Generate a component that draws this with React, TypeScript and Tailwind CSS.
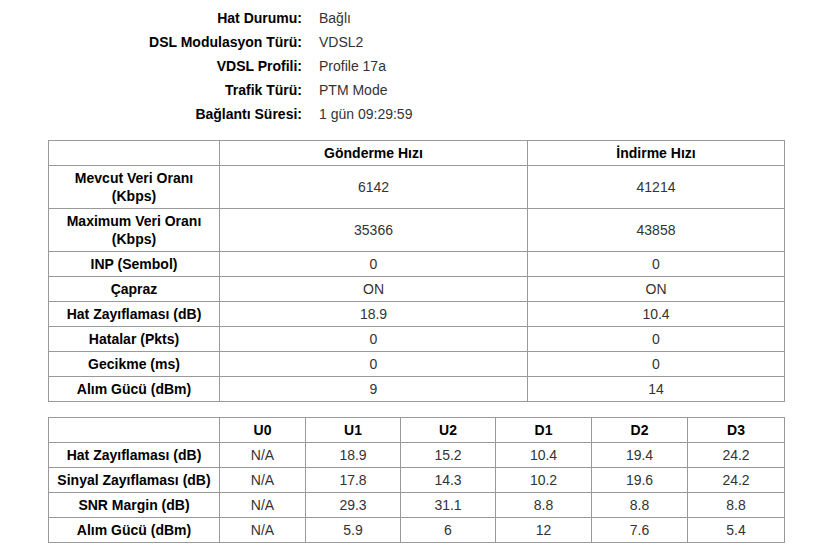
const info: [string, string][] = [
  ["Hat Durumu:", "Bağlı"],
  ["DSL Modulasyon Türü:", "VDSL2"],
  ["VDSL Profili:", "Profile 17a"],
  ["Trafik Türü:", "PTM Mode"],
  ["Bağlantı Süresi:", "1 gün 09:29:59"],
];

const rates: [string[], string, string][] = [
  [["Mevcut Veri Oranı", "(Kbps)"], "6142", "41214"],
  [["Maximum Veri Oranı", "(Kbps)"], "35366", "43858"],
  [["INP (Sembol)"], "0", "0"],
  [["Çapraz"], "ON", "ON"],
  [["Hat Zayıflaması (dB)"], "18.9", "10.4"],
  [["Hatalar (Pkts)"], "0", "0"],
  [["Gecikme (ms)"], "0", "0"],
  [["Alım Gücü (dBm)"], "9", "14"],
];

const bands = ["U0", "U1", "U2", "D1", "D2", "D3"];
const bandRows: [string, string[]][] = [
  ["Hat Zayıflaması (dB)", ["N/A", "18.9", "15.2", "10.4", "19.4", "24.2"]],
  ["Sinyal Zayıflaması (dB)", ["N/A", "17.8", "14.3", "10.2", "19.6", "24.2"]],
  ["SNR Margin (dB)", ["N/A", "29.3", "31.1", "8.8", "8.8", "8.8"]],
  ["Alım Gücü (dBm)", ["N/A", "5.9", "6", "12", "7.6", "5.4"]],
];

const cell = "border border-[#999] px-1 py-[3px] text-center";

export default function App() {
  return (
    <div className="min-h-screen bg-white font-['Liberation_Sans',Arial,sans-serif] text-[14px] leading-[18px] text-[#333]">
      <div className="pt-[6px]">
        {info.map(([k, v]) => (
          <div key={k} className="flex h-6 items-center">
            <div className="w-[302px] text-right font-bold text-black">{k}</div>
            <div className="pl-[17px]">{v}</div>
          </div>
        ))}
      </div>

      <table className="ml-[48px] mt-[14px] w-[736px] table-fixed border-collapse">
        <colgroup>
          <col className="w-[171px]" />
          <col className="w-[308px]" />
          <col className="w-[257px]" />
        </colgroup>
        <thead>
          <tr>
            <th className={cell}></th>
            <th className={`${cell} font-bold text-black`}>Gönderme Hızı</th>
            <th className={`${cell} font-bold text-black`}>İndirme Hızı</th>
          </tr>
        </thead>
        <tbody>
          {rates.map(([label, up, down]) => (
            <tr key={label.join(" ")}>
              <td className={`${cell} font-bold text-black`}>
                {label.map((l) => (
                  <div key={l}>{l}</div>
                ))}
              </td>
              <td className={cell}>{up}</td>
              <td className={cell}>{down}</td>
            </tr>
          ))}
        </tbody>
      </table>

      <table className="ml-[48px] mt-[15px] w-[736px] table-fixed border-collapse">
        <colgroup>
          <col className="w-[171px]" />
          <col className="w-[86px]" />
          <col className="w-[95px]" />
          <col className="w-[95px]" />
          <col className="w-[96px]" />
          <col className="w-[96px]" />
          <col className="w-[97px]" />
        </colgroup>
        <thead>
          <tr>
            <th className={cell}></th>
            {bands.map((b) => (
              <th key={b} className={`${cell} font-bold text-black`}>
                {b}
              </th>
            ))}
          </tr>
        </thead>
        <tbody>
          {bandRows.map(([label, vals]) => (
            <tr key={label}>
              <td className={`${cell} whitespace-nowrap font-bold text-black`}>{label}</td>
              {vals.map((v, i) => (
                <td key={i} className={cell}>
                  {v}
                </td>
              ))}
            </tr>
          ))}
        </tbody>
      </table>
    </div>
  );
}
